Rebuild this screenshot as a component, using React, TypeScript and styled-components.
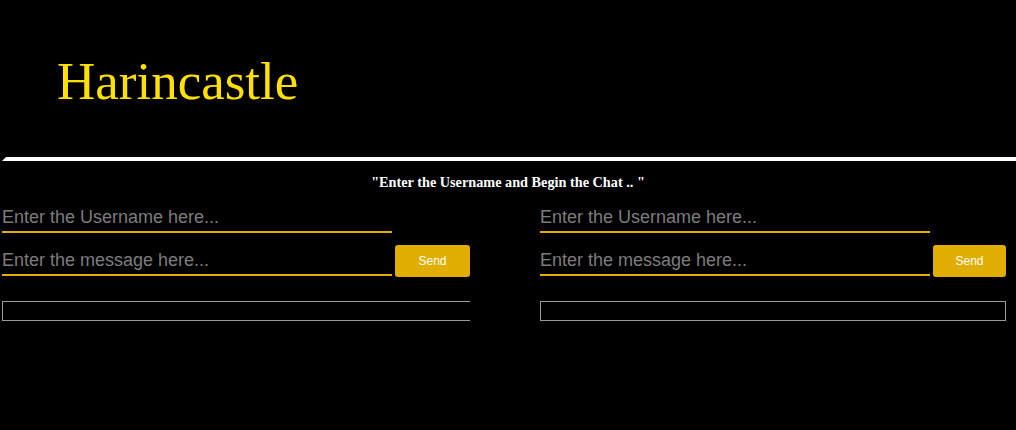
import React from "react";
import styled, { createGlobalStyle } from "styled-components";

const GlobalStyle = createGlobalStyle`
  html, body {
    margin: 0;
    padding: 0;
    background: #000;
  }
  body {
    font-family: "Liberation Serif", "Times New Roman", serif;
    min-height: 430px;
  }
`;

const Header = styled.header`
  padding: 51px 0 0 57px;
`;

const Title = styled.h1`
  margin: 0;
  font-family: "Liberation Serif", "Times New Roman", serif;
  font-weight: 400;
  font-size: 53px;
  line-height: 61px;
  color: #ffe000;
`;

const Divider = styled.hr`
  margin: 45px 0 0 2px;
  height: 0;
  border: none;
  border-bottom: 4px solid #fff;
  border-left: 4px solid transparent;
`;

const Prompt = styled.p`
  margin: 13px 0 0;
  text-align: center;
  font-family: "Liberation Serif", "Times New Roman", serif;
  font-weight: 700;
  font-size: 14.25px;
  line-height: 16px;
  color: #fff;
`;

const ChatArea = styled.main`
  display: grid;
  grid-template-columns: 468px 466px;
  column-gap: 70px;
  padding: 13px 10px 0 2px;
`;

const Column = styled.section`
  display: flex;
  flex-direction: column;
`;

const Field = styled.input`
  display: block;
  box-sizing: border-box;
  width: 390px;
  height: 30px;
  margin: 0;
  padding: 0;
  border: none;
  border-bottom: 2px solid #e0ae00;
  background: transparent;
  color: #ddd;
  font-family: "Liberation Sans", Arial, sans-serif;
  font-size: 18px;
  outline: none;
  &::placeholder {
    color: #7d7d7d;
  }
`;

const MessageRow = styled.div`
  display: flex;
  align-items: center;
  gap: 3px;
  margin-top: 12px;
`;

const SendButton = styled.button`
  flex: 1;
  height: 32px;
  margin: 0;
  padding: 0;
  border: none;
  border-radius: 3px;
  background: #dfae00;
  color: #fff;
  font-family: "Liberation Sans", Arial, sans-serif;
  font-size: 12px;
  cursor: pointer;
`;

const Log = styled.div<{ $open?: boolean }>`
  box-sizing: border-box;
  height: 20px;
  margin-top: 24px;
  border: 1px solid #9a9a9a;
  border-right: ${(p) => (p.$open ? "none" : "1px solid #9a9a9a")};
`;

const ChatPanel: React.FC<{ open?: boolean }> = ({ open }) => (
  <Column>
    <Field type="text" placeholder="Enter the Username here..." />
    <MessageRow>
      <Field type="text" placeholder="Enter the message here..." />
      <SendButton type="button">Send</SendButton>
    </MessageRow>
    <Log $open={open} />
  </Column>
);

export default function App() {
  return (
    <>
      <GlobalStyle />
      <Header>
        <Title>Harincastle</Title>
      </Header>
      <Divider />
      <Prompt>"Enter the Username and Begin the Chat .. "</Prompt>
      <ChatArea>
        <ChatPanel open />
        <ChatPanel />
      </ChatArea>
    </>
  );
}
